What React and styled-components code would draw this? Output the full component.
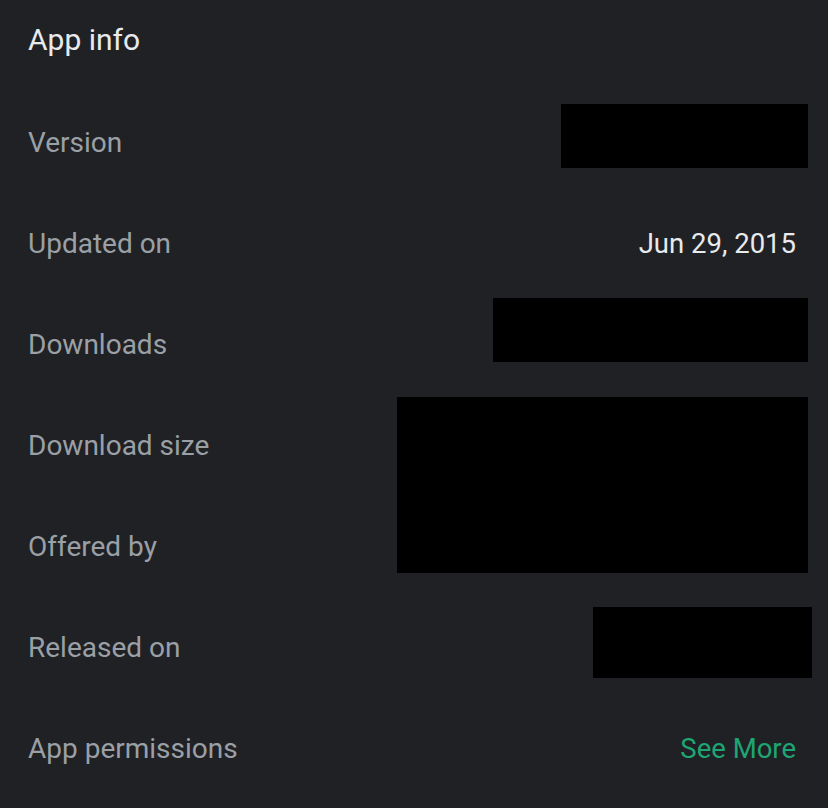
import React from "react";
import styled, { createGlobalStyle } from "styled-components";

const Global = createGlobalStyle`
  html, body { margin: 0; padding: 0; background: #202124; }
  body { font-family: Roboto, "Noto Sans", sans-serif; -webkit-font-smoothing: antialiased; }
`;

const Page = styled.div`
  position: relative;
  width: 828px;
  height: 808px;
  background: #202124;
  overflow: hidden;
`;

const Title = styled.h1`
  margin: 0;
  height: 92px;
  padding: 0 28px 14px;
  display: flex;
  align-items: center;
  font-size: 30px;
  font-weight: 400;
  color: #e8eaed;
  box-sizing: border-box;
`;

const List = styled.div`
  display: flex;
  flex-direction: column;
`;

const Row = styled.div`
  height: 101px;
  display: flex;
  align-items: center;
  justify-content: space-between;
  padding: 0 32px 0 28px;
`;

const Label = styled.span`
  font-size: 28px;
  color: #9aa0a6;
`;

const Value = styled.span`
  font-size: 27.5px;
  color: ${(p) => (p.$link ? "#1ea574" : "#e8eaed")};
`;

const Redaction = styled.div`
  position: absolute;
  background: #000;
`;

const rows = [
  ["Version", ""],
  ["Updated on", "Jun 29, 2015"],
  ["Downloads", ""],
  ["Download size", ""],
  ["Offered by", ""],
  ["Released on", ""],
  ["App permissions", "See More", true],
];

const boxes = [
  { left: 561, top: 104, width: 247, height: 64 },
  { left: 493, top: 298, width: 315, height: 64 },
  { left: 397, top: 397, width: 411, height: 176 },
  { left: 593, top: 607, width: 219, height: 71 },
];

export default function App() {
  return (
    <Page>
      <Global />
      <Title>App info</Title>
      <List>
        {rows.map(([l, v, link]) => (
          <Row key={l}>
            <Label>{l}</Label>
            <Value $link={link}>{v}</Value>
          </Row>
        ))}
      </List>
      {boxes.map((b, i) => (
        <Redaction key={i} style={b} />
      ))}
    </Page>
  );
}
